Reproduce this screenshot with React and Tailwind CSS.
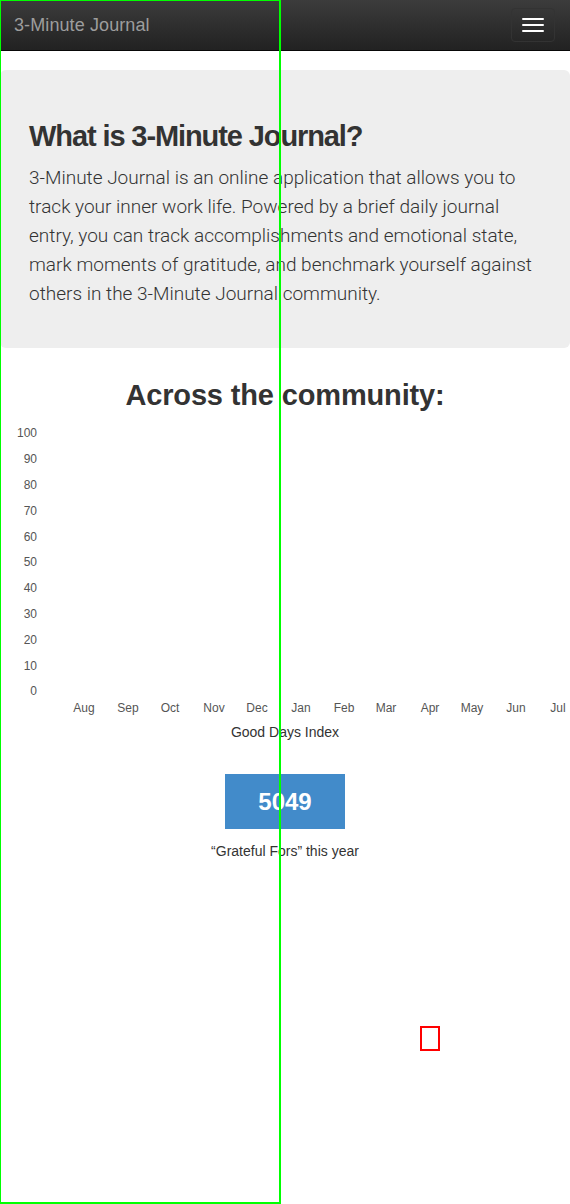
export default function App() {
  const yLabels = [100, 90, 80, 70, 60, 50, 40, 30, 20, 10, 0];
  const months = ["Aug", "Sep", "Oct", "Nov", "Dec", "Jan", "Feb", "Mar", "Apr", "May", "Jun", "Jul"];
  const monthX = [84, 128, 170, 214, 257, 301, 344, 386, 430, 472, 516, 558];
  return (
    <div className="relative min-h-[1204px] w-full bg-white overflow-hidden" style={{ fontFamily: '"Liberation Sans", Arial, sans-serif' }}>
      <nav className="h-[51px] flex items-center justify-between border-b border-[#080808] bg-gradient-to-b from-[#3c3c3c] to-[#222222]">
        <span className="pl-[14px] text-[18px] text-[#9d9d9d] tracking-[0.1px]">3-Minute Journal</span>
        <button className="mr-[15px] w-[44px] h-[34px] rounded border border-[#333] flex flex-col items-center justify-center gap-[4px]">
          <span className="block w-[22px] h-[2px] bg-white rounded-[1px]"></span>
          <span className="block w-[22px] h-[2px] bg-white rounded-[1px]"></span>
          <span className="block w-[22px] h-[2px] bg-white rounded-[1px]"></span>
        </button>
      </nav>

      <section className="mt-[19px] bg-[#eeeeee] rounded-[6px] pl-[29px] pr-[30px] pt-[50px] pb-[40px]">
        <h1 className="text-[29px] font-bold leading-[33px] text-[#333] tracking-[-1.1px]">What is 3-Minute Journal?</h1>
        <p className="mt-[10px] text-[19px] font-light leading-[29px] text-[#333]" style={{ fontFamily: 'Roboto, "Liberation Sans", sans-serif' }}>
          3-Minute Journal is an online application that allows you to track your inner work life. Powered by a brief daily journal entry, you can track accomplishments and emotional state, mark moments of gratitude, and benchmark yourself against others in the 3-Minute Journal community.
        </p>
      </section>

      <h2 className="mt-[31px] text-center text-[29px] font-bold leading-[33px] text-[#333] tracking-[-0.15px]">Across the community:</h2>

      <svg width="570" height="305" className="block mt-[4px]" style={{ fontFamily: '"Liberation Sans", Arial, sans-serif' }}>
        {yLabels.map((v, i) => (
          <text key={v} x="37" y={17 + i * 25.8 + 4.3} textAnchor="end" fontSize="12" fill="#555">{v}</text>
        ))}
        {months.map((m, i) => (
          <text key={m} x={monthX[i]} y={296} textAnchor="middle" fontSize="12" fill="#555">{m}</text>
        ))}
      </svg>

      <div className="text-center text-[14px] leading-[20px] text-[#333] mt-[1px]">Good Days Index</div>

      <div className="flex justify-center mt-[32px]">
        <div className="w-[120px] h-[55px] bg-[#428bca] flex items-center justify-center text-white text-[24px] font-bold">5049</div>
      </div>
      <div className="text-center text-[14px] leading-[20px] text-[#333] mt-[12px]">“Grateful Fors” this year</div>

      <div className="absolute left-[-1px] top-[-1px] w-[282px] h-[1205px] border-2 border-[#00ff00] pointer-events-none"></div>
      <div className="absolute left-[420px] top-[1026px] w-[20px] h-[25px] border-2 border-[#ff0000] pointer-events-none"></div>
    </div>
  );
}
